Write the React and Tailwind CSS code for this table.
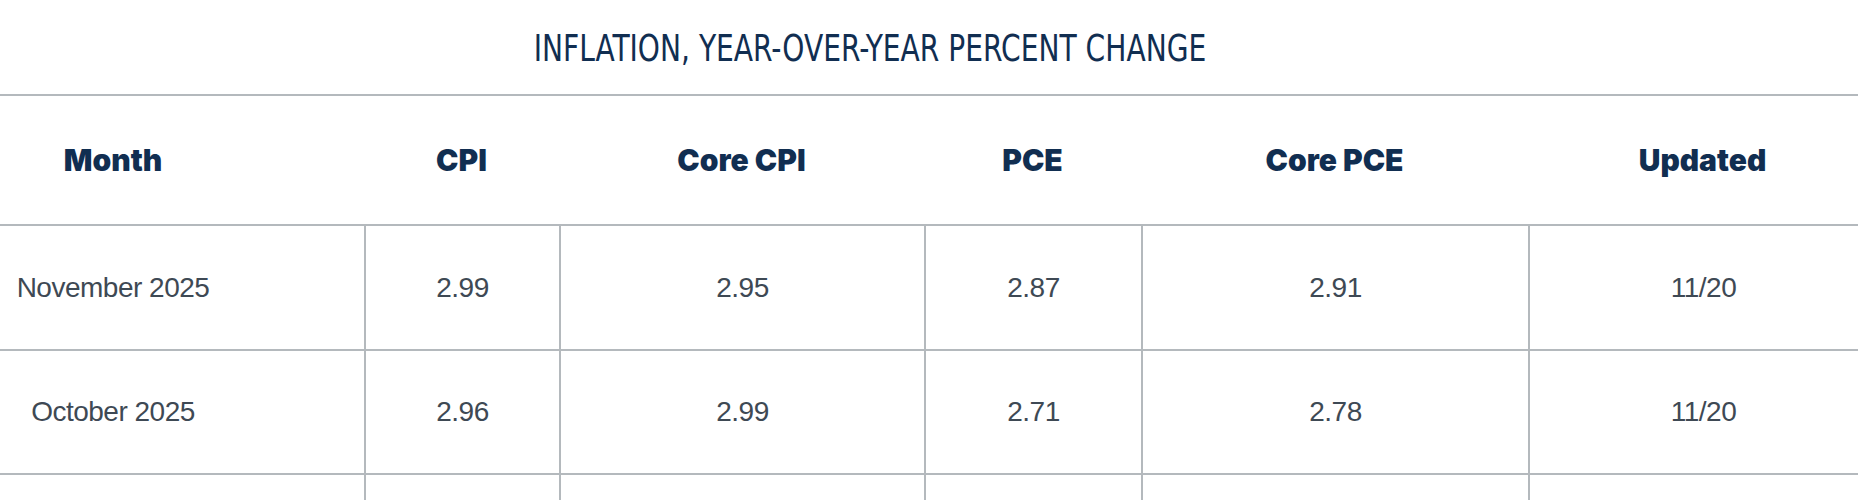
const columns = ["Month", "CPI", "Core CPI", "PCE", "Core PCE", "Updated"];

const rows = [
  { month: "November 2025", cpi: "2.99", coreCpi: "2.95", pce: "2.87", corePce: "2.91", updated: "11/20" },
  { month: "October 2025", cpi: "2.96", coreCpi: "2.99", pce: "2.71", corePce: "2.78", updated: "11/20" },
];

const grid = "grid grid-cols-[364px_195px_365px_217px_387px_349px]";
const cell = "flex items-center justify-center border-l-2 border-[#b4b9bd]";

export default function App() {
  return (
    <div className="w-full overflow-hidden bg-white">
      <div className="w-[1877px]">
        <div className="flex h-[94px] items-center justify-center pr-[137px]">
          <h2 className="inline-block scale-x-[0.845] font-['DejaVu_Sans_Condensed','DejaVu_Sans',sans-serif] text-[37px] leading-none text-[#112e51] pt-[2px]">
            INFLATION, YEAR-OVER-YEAR PERCENT CHANGE
          </h2>
        </div>

        <div className={`${grid} h-[132px] border-y-2 border-[#b4b9bd] font-['Inter',sans-serif] text-[30px] font-black text-[#112e51]`}>
          {columns.map((col, i) => (
            <div
              key={col}
              className={`flex items-center justify-center ${i === 0 ? "pr-[138px]" : ""}`}
            >
              {col}
            </div>
          ))}
        </div>

        {rows.map((row, r) => (
          <div
            key={row.month}
            className={`${grid} ${r === 0 ? "h-[125px]" : "h-[124px]"} border-b-2 border-[#b4b9bd] font-['Liberation_Sans',sans-serif] text-[28px] tracking-[-0.5px] text-[#3e4954]`}
          >
            <div className="flex items-center justify-center pr-[138px]">{row.month}</div>
            <div className={cell}>{row.cpi}</div>
            <div className={cell}>{row.coreCpi}</div>
            <div className={cell}>{row.pce}</div>
            <div className={cell}>{row.corePce}</div>
            <div className={cell}>{row.updated}</div>
          </div>
        ))}

        <div className={`${grid} h-[124px]`}>
          <div />
          <div className={cell} />
          <div className={cell} />
          <div className={cell} />
          <div className={cell} />
          <div className={cell} />
        </div>
      </div>
    </div>
  );
}
